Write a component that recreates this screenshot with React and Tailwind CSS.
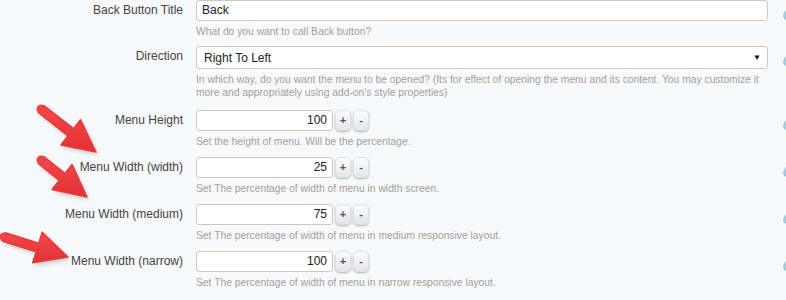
import React from 'react';

const rows = [
  { label: 'Back Button Title', type: 'text', value: 'Back', help: ['What do you want to call Back button?'] },
  {
    label: 'Direction',
    type: 'select',
    value: 'Right To Left',
    help: [
      "In which way, do you want the menu to be opened? (Its for effect of opening the menu and its content. You may customize it",
      "more and appropriately using add-on's style properties)"
    ]
  },
  { label: 'Menu Height', type: 'number', value: '100', help: ['Set the height of menu. Will be the percentage.'] },
  { label: 'Menu Width (width)', type: 'number', value: '25', help: ['Set The percentage of width of menu in width screen.'] },
  { label: 'Menu Width (medium)', type: 'number', value: '75', help: ['Set The percentage of width of menu in medium responsive layout.'] },
  { label: 'Menu Width (narrow)', type: 'number', value: '100', help: ['Set The percentage of width of menu in narrow responsive layout.'] }
];

// red arrow from tail to tip
function Arrow({ x1, y1, x2, y2 }) {
  const dx = x2 - x1;
  const dy = y2 - y1;
  const len = Math.sqrt(dx * dx + dy * dy);
  const ux = dx / len;
  const uy = dy / len;
  const nx = -uy;
  const ny = ux;
  const shaft = 4.5;
  const head = 16;
  const headLen = 32;
  const bx = x2 - ux * headLen;
  const by = y2 - uy * headLen;
  const pts = [
    [x1 + nx * shaft, y1 + ny * shaft],
    [bx + nx * shaft, by + ny * shaft],
    [bx + nx * head, by + ny * head],
    [x2, y2],
    [bx - nx * head, by - ny * head],
    [bx - nx * shaft, by - ny * shaft],
    [x1 - nx * shaft, y1 - ny * shaft]
  ]
    .map((p) => p.map((v) => v.toFixed(1)).join(','))
    .join(' ');
  return (
    <g>
      <polygon points={pts} fill="#000" opacity="0.18" transform="translate(2,3)" filter="url(#blur)" />
      <polygon points={pts} fill="url(#redg)" strokeLinejoin="round" stroke="#e8393b" strokeWidth="1.5" />
      <circle cx={x1} cy={y1} r={shaft} fill="#ee4446" />
    </g>
  );
}

function Drop() {
  return (
    <svg width="10" height="12" viewBox="0 0 10 12" className="shrink-0">
      <path d="M5 1 C3 4 1.5 6 1.5 8 A3.5 3.5 0 0 0 8.5 8 C8.5 6 7 4 5 1 Z" fill="#a9cde0" stroke="#7fb0c9" strokeWidth="0.6" />
    </svg>
  );
}

function StepButton({ children }) {
  return (
    <div className="flex h-[21px] w-[16px] items-center justify-center rounded-[5px] border border-[#dcdfe4] bg-gradient-to-b from-[#fdfdfe] to-[#e2e5ea] text-[11px] font-bold text-[#555] shadow-[0_1px_2px_rgba(0,0,0,0.3)]">
      {children}
    </div>
  );
}

export default function App() {
  return (
    <div
      className="relative w-[786px] h-[300px] overflow-hidden bg-[#f8f9fb] text-[#444]"
      style={{ fontFamily: '"Liberation Sans", Arial, sans-serif' }}
    >
      <div className="flex flex-col">
        {rows.map((row, i) => (
          <div
            key={i}
            className={`flex items-start ${i === 1 ? 'pb-[10px]' : i === 0 ? 'pb-[8px]' : 'pb-[9px]'} ${i === 2 ? 'mt-[1px]' : ''}`}
          >
            <div className="w-[183px] shrink-0 text-right text-[12px] leading-[21px] text-[#444]">{row.label}</div>
            <div className="ml-[13px] flex-1 min-w-0">
              {row.type === 'text' && (
                <div className="h-[21px] w-[572px] rounded-[3px] border border-[#c8c8c8] bg-white px-[5px] text-[12px] leading-[19px] text-[#222]">
                  {row.value}
                </div>
              )}
              {row.type === 'select' && (
                <div className="flex h-[23px] w-[572px] items-center justify-between rounded-[3px] border border-[#c8c8c8] bg-white pl-[7px] pr-[6px] text-[12px] text-[#222]">
                  <span>{row.value}</span>
                  <span className="text-[8px] text-black">▼</span>
                </div>
              )}
              {row.type === 'number' && (
                <div className="flex items-center gap-[2px]">
                  <div className="h-[21px] w-[137px] rounded-[3px] border border-[#c8c8c8] bg-white px-[5px] text-right text-[12px] leading-[19px] text-[#222]">
                    {row.value}
                  </div>
                  <StepButton>+</StepButton>
                  <StepButton>-</StepButton>
                </div>
              )}
              <div className="mt-[4px] text-[10.3px] leading-[13px] text-[#a0a0a0]">
                {row.help.map((h, j) => (
                  <div key={j} className="whitespace-nowrap">{h}</div>
                ))}
              </div>
            </div>
            <div className="mt-[8px] -mr-[6px] ml-[2px]">
              <Drop />
            </div>
          </div>
        ))}
      </div>

      <svg className="pointer-events-none absolute left-0 top-0" width="786" height="300">
        <defs>
          <linearGradient id="redg" x1="0" y1="0" x2="0" y2="1">
            <stop offset="0" stopColor="#f24a4c" />
            <stop offset="1" stopColor="#e23133" />
          </linearGradient>
          <filter id="blur" x="-20%" y="-20%" width="140%" height="140%">
            <feGaussianBlur stdDeviation="2" />
          </filter>
        </defs>
        <Arrow x1={41} y1={109} x2={96} y2={152} />
        <Arrow x1={41} y1={160} x2={87} y2={197} />
        <Arrow x1={4} y1={237} x2={68} y2={257} />
      </svg>
    </div>
  );
}
